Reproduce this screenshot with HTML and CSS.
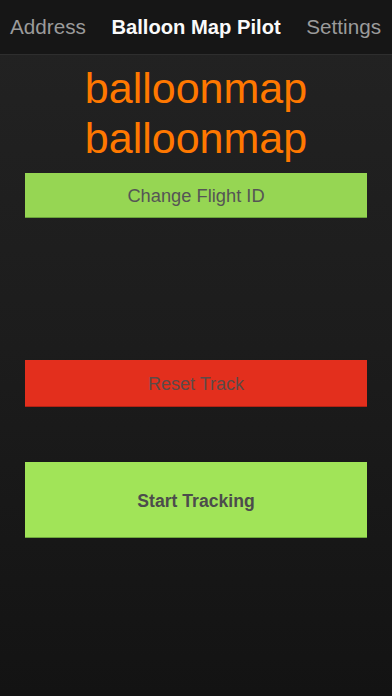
FILE: index.html
```html
<!doctype html>
<html lang="en">
	<head>
		<meta charset="UTF-8" />
		<meta name="viewport" content="width=device-width, initial-scale=1.0" />
		<title>Balloon Map Pilot</title>
		<link rel="stylesheet" href="styles.css">
	</head>
	<body>
		<div class="navbar">
			<span class="nav-link">Address</span>
			<span class="nav-title">Balloon Map Pilot</span>
			<span class="nav-link">Settings</span>
		</div>

		<div class="content">
			<div class="flight-name">
				<div>balloonmap</div>
				<div>balloonmap</div>
			</div>

			<button class="btn btn-change">Change Flight ID</button>
			<button class="btn btn-reset">Reset Track</button>
			<button class="btn btn-start">Start Tracking</button>
		</div>
	</body>
</html>
```

FILE: styles.css
```css
html,
body {
	height: 100%;
}
body {
	margin: 0;
	font-family: "Liberation Sans", Arial, sans-serif;
	background: linear-gradient(#232323, #1c1c1c 50%, #131313);
	color: white;
}
.navbar {
	height: 54px;
	display: flex;
	align-items: center;
	justify-content: space-between;
	padding: 0 11px 0 10px;
	background: #161616;
	border-bottom: 1px solid #2e2e2e;
}
.nav-link {
	font-size: 20.7px;
	color: #9b9b9b;
}
.nav-title {
	font-size: 20.2px;
	font-weight: bold;
	color: #fafafa;
}
.content {
	padding: 8px 25px 0;
	display: flex;
	flex-direction: column;
}
.flight-name {
	text-align: center;
	font-size: 43px;
	line-height: 50px;
	color: #ff7800;
	margin-bottom: 10px;
}
.btn {
	font-family: inherit;
	border: none;
	border-radius: 0;
	padding: 0;
	margin: 0;
	width: 100%;
	color: #555;
	font-size: 18.3px;
}
.btn-change {
	height: 45px;
	padding-top: 2px;
	background: #96d653;
	border-bottom: 1px solid #6aa33a;
}
.btn-reset {
	margin-top: 142px;
	height: 47px;
	padding-top: 2px;
	background: #e32f1d;
	border-bottom: 1px solid #b32214;
	color: #5d4a47;
	font-size: 18px;
}
.btn-start {
	margin-top: 55px;
	height: 76px;
	padding-top: 4px;
	background: #a1e458;
	border-bottom: 1px solid #6fa83d;
	font-weight: bold;
	font-size: 17.6px;
	color: #4c4c4c;
}
```
